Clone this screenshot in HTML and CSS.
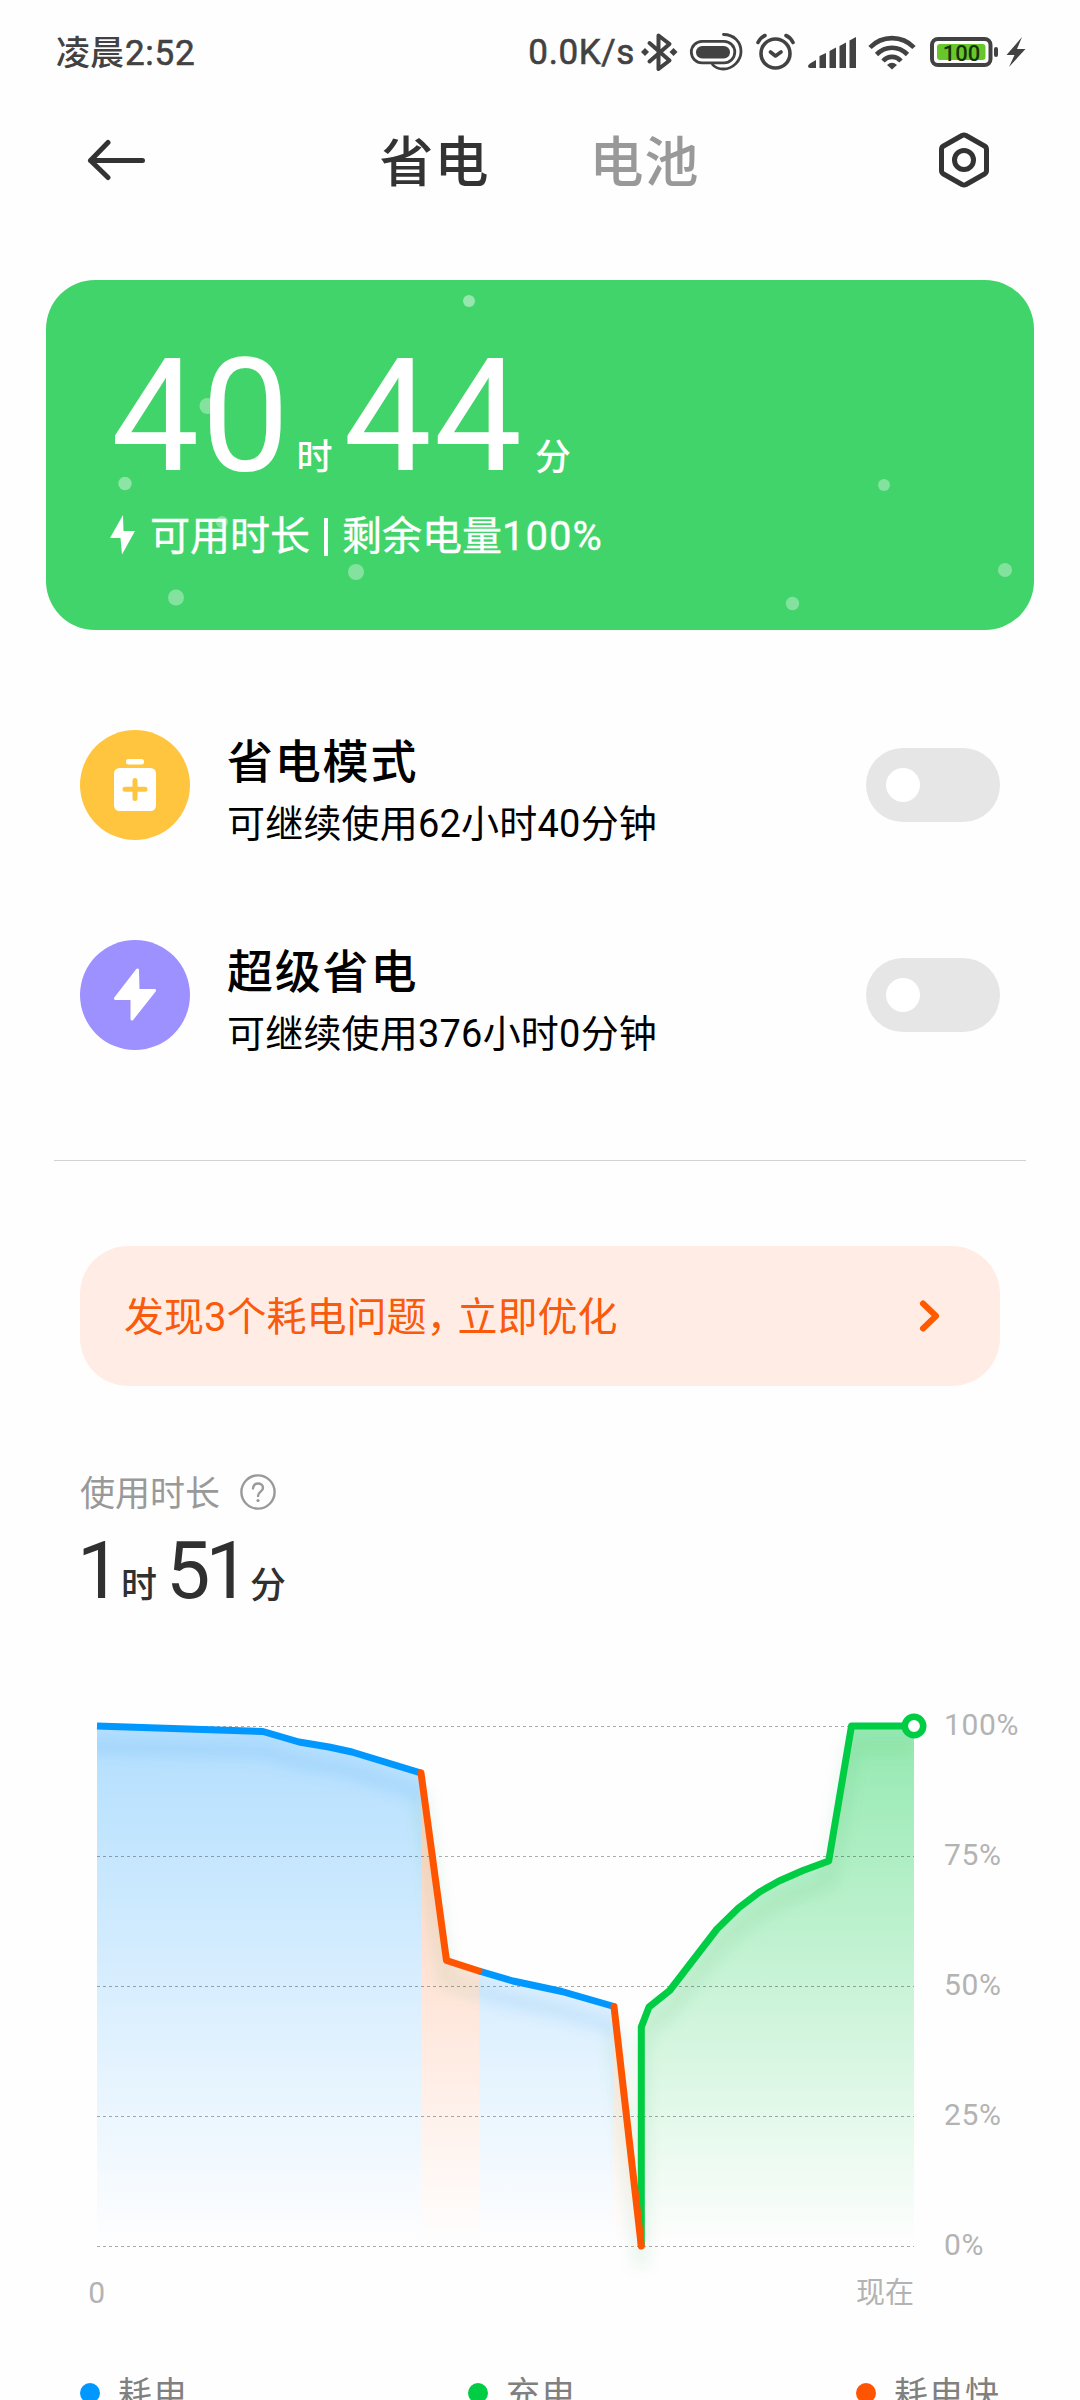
FILE: index.html
```html
<!DOCTYPE html>
<html lang="zh-CN">
<head>
<meta charset="utf-8">
<title>省电与电池</title>
<link rel="stylesheet" href="styles.css">
</head>
<body>
<header class="status">
  <span class="status-time">凌晨<span class="clock">2:52</span></span>
  <div class="status-right">
    <span class="net-speed">0.0K/s</span>
    <svg class="status-icons" width="400" height="50" viewBox="635 27 400 50" fill="none" stroke="#424242" stroke-linecap="round" stroke-linejoin="round">
      <path stroke-width="4" d="M649.500 43l20 17.500-11 8.500V35.500l11 8.500-20 17.500"/>
      <path fill="#424242" stroke="none" d="M645 48l4 4-4 4-4-4zM673.500 48l4 4-4 4-4-4z"/>
      <rect x="691.300" y="41.300" width="43.500" height="21.500" rx="10.750" stroke-width="2.800"/>
      <rect x="696" y="46" width="34" height="12.500" rx="6.250" fill="#424242" stroke="none"/>
      <path stroke-width="2.800" d="M723.500 34.500c11 0 17.500 8 17.500 17s-8 17.500-17.500 17.500c-5 0-9-2-11-4.500"/>
      <circle cx="775.500" cy="53.500" r="14.500" stroke-width="3.600"/>
      <path stroke-width="3.600" d="M770.500 52l5 4 5.500-4M758 42.500q2.500-5 7-7M793 42.500q-2.500-5-7-7"/>
      <path fill="#424242" stroke="none" d="M808 66q0-2 8-6v8h-6q-2 0-2-2zM819.500 56l6.500-3v15h-6.500zM829.500 51l6.500-3.500V68h-6.500zM839.500 46l6.500-3.500V68h-6.500zM849.500 40.500l6.500-3.500v31h-6.500z"/>
      <path stroke-width="4.600" stroke-linecap="butt" d="M870 47.500c12-12.500 32-12.500 44 0M876.500 54.500c9-9 22-9 31 0M883 61c5-5.500 13-5.500 18 0"/>
      <path fill="#424242" stroke="none" d="M887 65q5-4.500 10 0l-5 4.500z"/>
      <rect x="932" y="39" width="58.500" height="26" rx="6" stroke-width="4"/>
      <rect x="937" y="44" width="48.500" height="16" rx="3" fill="#67c72a" stroke="none"/>
      <rect x="994" y="47" width="4" height="10" rx="2" fill="#424242" stroke="none"/>
      <text class="battery-level" x="961.500" y="60.500" text-anchor="middle">100</text>
      <path fill="#424242" stroke="none" d="M1022 37l-15.500 18h8l-5.500 12 16.500-18h-8.500z"/>
    </svg>
  </div>
</header>

<nav class="topbar">
  <svg width="58" height="42" viewBox="0 0 58 42" fill="none" stroke="#333" stroke-width="5" stroke-linecap="round" stroke-linejoin="round"><path d="M21 3.500L3.500 21.500 21 38.500M3.500 21.500H55.500"/></svg>
  <div class="tabs"><span class="tab active">省电</span><span class="tab">电池</span></div>
  <svg width="52" height="56" viewBox="0 0 52 56" fill="none" stroke="#333" stroke-width="5" stroke-linejoin="round"><path d="M24 3.500q2-1 4 0L46.500 14q2 1.200 2 3.500v21q0 2.300-2 3.500L28 52.500q-2 1-4 0L5.500 42q-2-1.200-2-3.500v-21q0-2.300 2-3.500z"/><circle cx="26" cy="28" r="9.500"/></svg>
</nav>

<section class="battery-card">
  <svg class="bubbles" width="988" height="350" viewBox="46 280 988 350" fill="#fff" fill-opacity=".35"><circle cx="469" cy="301" r="6" fill-opacity=".45"/><circle cx="207.500" cy="406" r="8"/><circle cx="125" cy="483.500" r="6.700" fill-opacity=".4"/><circle cx="222" cy="522" r="6"/><circle cx="356" cy="572" r="8"/><circle cx="176" cy="597.500" r="8"/><circle cx="884" cy="485" r="6"/><circle cx="1005" cy="570" r="7"/><circle cx="792.500" cy="603.500" r="6.700"/></svg>
  <div class="remaining"><b>40</b><span>时</span><b>44</b><span>分</span></div>
  <div class="remaining-note">
    <svg width="26" height="40" viewBox="0 0 26 40" fill="#fff"><path d="M13 0L0 23h10.500L12 39.500 25 16H13.500z"/></svg>
    <span>可用时长</span><i></i><span>剩余电量<span class="percent">100%</span></span>
  </div>
</section>

<section class="modes">
  <div class="mode">
    <svg width="110" height="110" viewBox="0 0 110 110"><circle cx="55" cy="55" r="55" fill="#ffc53f"/><rect x="46" y="29" width="18" height="5.500" rx="2.500" fill="#fff"/><rect x="34" y="38" width="42" height="43" rx="5.500" fill="#fff"/><path d="M55 50.500v18M45 59.300h20" stroke="#ffc53f" stroke-width="5" stroke-linecap="round"/></svg>
    <div class="mode-text"><h2>省电模式</h2><p>可继续使用62小时40分钟</p></div>
    <span class="switch"></span>
  </div>
  <div class="mode">
    <svg width="110" height="110" viewBox="0 0 110 110"><circle cx="55" cy="55" r="55" fill="#9d90ff"/><path d="M57.500 30L35.500 58.500h16.500v20.500l22.500-28.500H58z" fill="#fff" stroke="#fff" stroke-width="3" stroke-linejoin="round"/></svg>
    <div class="mode-text"><h2>超级省电</h2><p>可继续使用376小时0分钟</p></div>
    <span class="switch"></span>
  </div>
</section>

<section class="issues">
  <span class="issues-text">发现3个耗电问题<span class="comma">，</span>立即优化</span>
  <svg width="24" height="36" viewBox="0 0 24 36" fill="none" stroke="#ff5a00" stroke-width="6" stroke-linecap="round" stroke-linejoin="round"><path d="M5 5.500l13 12.500L5 30.500"/></svg>
</section>

<section class="usage">
  <div class="usage-label"><span>使用时长</span><svg width="36" height="36" viewBox="0 0 36 36" fill="none" stroke="#999" stroke-width="2.400" stroke-linecap="round"><circle cx="18" cy="18" r="16.600"/><path d="M13 14.500c.3-3.300 2.300-5 5-5s5 1.700 5 4.500c0 3.500-5 4-5 8"/><circle cx="18" cy="26.500" r="1.600" fill="#999" stroke="none"/></svg></div>
  <div class="usage-time"><b class="hours">1</b><span>时</span><b class="minutes">51</b><span>分</span></div>
</section>

<svg class="chart" width="1080" height="640" viewBox="0 1690 1080 640" fill="none">
  <defs>
    <linearGradient id="blue" gradientUnits="userSpaceOnUse" x1="0" y1="1726" x2="0" y2="2246"><stop stop-color="#0095ff" stop-opacity=".3"/><stop offset="1" stop-color="#0095ff" stop-opacity="0"/></linearGradient>
    <linearGradient id="orange" gradientUnits="userSpaceOnUse" x1="0" y1="1726" x2="0" y2="2246"><stop stop-color="#ff5500" stop-opacity=".3"/><stop offset="1" stop-color="#ff5500" stop-opacity="0"/></linearGradient>
    <linearGradient id="green" gradientUnits="userSpaceOnUse" x1="0" y1="1726" x2="0" y2="2246"><stop stop-color="#00cc44" stop-opacity=".42"/><stop offset="1" stop-color="#00cc44" stop-opacity="0"/></linearGradient>
    <filter id="soft" filterUnits="userSpaceOnUse" x="60" y="1690" width="900" height="640"><feGaussianBlur stdDeviation="7"/></filter>
    <clipPath id="plot"><path d="M97 1690H914V2330H97z"/></clipPath>
  </defs>
  <path fill="url(#blue)" d="M97 1726L263 1731.500 299 1742 329 1747 352 1752 421 1773V2246H97zM479 1971L513 1981 562 1991.500 614 2006.500V2246H479z"/>
  <path fill="url(#orange)" d="M421 1773L446.500 1960.500 479 1971V2246H421zM614 2006.500L641.300 2246H614z"/>
  <path fill="url(#green)" d="M641.300 2246V2027L649 2007 669.700 1990.500 717 1929 738.500 1908 759.500 1892 779 1881 803 1870.500 828.700 1861 851.500 1726H914V2246z"/>
  <g clip-path="url(#plot)"><g filter="url(#soft)" stroke-width="14" stroke-opacity=".1" transform="translate(0 20)">
    <path stroke="#0077dd" d="M80 1726L263 1731.500 299 1742 329 1747 352 1752 421 1773M479 1971L513 1981 562 1991.500 614 2006.500"/>
    <path stroke="#30a050" d="M421 1773L446.500 1960.500 479 1971M614 2006.500L641.300 2246V2027L649 2007 669.700 1990.500 717 1929 738.500 1908 759.500 1892 779 1881 803 1870.500 828.700 1861 851.500 1726H914"/>
  </g></g>
  <path stroke="#000" stroke-opacity=".32" stroke-dasharray="3 3" d="M97 1726.500H914M97 1856.500H914M97 1986.500H914M97 2116.500H914M97 2246.500H914"/>
  <g stroke-width="7" stroke-linejoin="round">
    <path stroke="#0098ff" d="M97 1726L263 1731.500 299 1742 329 1747 352 1752 421 1773M479 1971L513 1981 562 1991.500 614 2006.500"/>
    <path stroke="#00cc44" d="M641.300 2246V2027L649 2007 669.700 1990.500 717 1929 738.500 1908 759.500 1892 779 1881 803 1870.500 828.700 1861 851.500 1726H914"/>
    <path stroke="#ff5500" stroke-linecap="round" d="M421 1773L446.500 1960.500 479 1971M614 2006.500L641.300 2246"/>
  </g>
  <circle cx="914" cy="1726" r="9.200" fill="#fff" stroke="#00cc44" stroke-width="6.600"/>
  <g class="axis-text">
    <text x="944" y="1735">100%</text><text x="944" y="1865">75%</text><text x="944" y="1995">50%</text><text x="944" y="2125">25%</text><text x="944" y="2255">0%</text>
    <text x="97" y="2303" text-anchor="middle">0</text><text x="914" y="2303" text-anchor="end" class="now">现在</text>
  </g>
</svg>

<footer class="legend">
  <span class="drain">耗电</span><span class="charge">充电</span><span class="fast">耗电快</span>
</footer>
</body>
</html>
```
FILE: styles.css
```css
* { box-sizing: border-box; }
body {
  margin: 0;
  width: 1080px;
  height: 2400px;
  overflow: hidden;
  display: flex;
  flex-direction: column;
  background: #fefefe;
  color: #303030;
  font-family: Roboto, "Noto Sans CJK SC", sans-serif;
}
body > * { flex-shrink: 0; }
svg { display: block; flex: none; }
h2, p { margin: 0; }
b { font-weight: 400; }

.status {
  height: 104px;
  padding: 27px 45px 0 56px;
  display: flex;
  justify-content: space-between;
  align-items: flex-start;
  color: #424242;
  font-size: 34px;
  font-weight: 500;
  line-height: 50px;
}
.status-time, .net-speed { padding-top: 1px; }
.clock { margin-left: 1px; font-weight: 400; font-size: 35px; letter-spacing: 0.7px; -webkit-text-stroke: 0.6px; }
.status-right { display: flex; }
.net-speed { font-weight: 400; font-size: 35px; letter-spacing: 0.6px; white-space: nowrap; -webkit-text-stroke: 0.6px; }
.battery-level { font-size: 22px; fill: #163306; stroke: none; }

.topbar {
  height: 112px;
  padding: 0 90px 0 87px;
  display: flex;
  align-items: center;
  justify-content: space-between;
}
.tabs { display: flex; gap: 100px; margin-right: 4px; padding-top: 8px; }
.tab { font-size: 54px; font-weight: 500; line-height: 80px; letter-spacing: 1px; color: #999; }
.tab.active { color: #333; }

.battery-card {
  position: relative;
  margin: 64px 46px 0;
  height: 350px;
  padding: 61px 0 0 65px;
  border-radius: 49px;
  background: #41d46a;
  color: #fff;
}
.bubbles { position: absolute; left: 0; top: 0; }
.remaining { position: relative; display: flex; align-items: baseline; height: 160px; line-height: 150px; }
.remaining b { font-size: 157px; letter-spacing: 2px; }
.remaining span { font-size: 36px; font-weight: 500; margin: 0 11px 0 5px; }
.remaining span:last-child { margin-left: 11px; }
.remaining-note { position: relative; display: flex; align-items: center; height: 72px; font-size: 40px; line-height: 60px; -webkit-text-stroke: 0.4px; }
.remaining-note svg { margin: -4px 14px 0 -1px; }
.remaining-note i { width: 4px; height: 38px; margin: 0 14px; background: #fff; }
.percent { letter-spacing: 1px; }

.modes {
  margin: 0 54px;
  padding: 100px 26px 110px;
  display: flex;
  flex-direction: column;
  gap: 100px;
  border-bottom: 1px solid #d3d3d3;
}
.mode { display: flex; align-items: center; height: 110px; color: #000; }
.mode-text { flex: 1; padding: 14px 0 0 37px; }
.mode h2 { font-size: 46px; font-weight: 500; line-height: 64px; letter-spacing: 1.8px; }
.mode p { font-size: 38px; line-height: 60px; letter-spacing: 0.2px; }
.switch { width: 134px; height: 74px; padding: 20px; border-radius: 37px; background: #e6e6e6; }
.switch::before { content: ""; display: block; width: 34px; height: 34px; border-radius: 50%; background: #fff; }

.issues {
  height: 140px;
  margin: 85px 80px 0;
  padding: 0 58px 0 44px;
  border-radius: 48px;
  display: flex;
  align-items: center;
  justify-content: space-between;
  background: #ffede5;
  color: #f95a0b;
  font-size: 40px;
  line-height: 60px;
}
.issues-text { padding-top: 4px; }
.comma { letter-spacing: -9px; }

.usage { height: 304px; padding: 80px 80px 0; }
.usage-label { display: flex; align-items: center; gap: 20px; height: 52px; color: #999; font-size: 35px; line-height: 50px; }
.usage-label span { padding-top: 5px; }
.usage-time { display: flex; align-items: baseline; line-height: 100px; height: 100px; padding-top: 3px; }
.usage-time b { font-size: 79px; }
.usage-time .hours { width: 44px; margin-left: -3px; }
.usage-time .minutes { width: 85px; padding-left: 3px; margin-right: 2px; letter-spacing: -5px; }
.usage-time span { font-size: 36px; width: 42px; font-weight: 500; }

.axis-text { font-size: 30px; letter-spacing: 0.6px; fill: #b3b3b3; }
.now { font-size: 29px; letter-spacing: 0; }

.legend { display: flex; padding: 0 80px; font-size: 34px; line-height: 50px; letter-spacing: 1.5px; color: #808080; margin-top: 35px; }
.legend span { width: 388px; flex: none; display: flex; align-items: center; gap: 18px; padding-top: 4px; white-space: nowrap; }
.legend span.fast { width: auto; }
.legend span::before { content: ""; width: 20px; height: 20px; margin-top: -2px; border-radius: 50%; background: #0098ff; }
.legend .charge::before { background: #00cc44; }
.legend .fast::before { background: #ff5500; }
```
